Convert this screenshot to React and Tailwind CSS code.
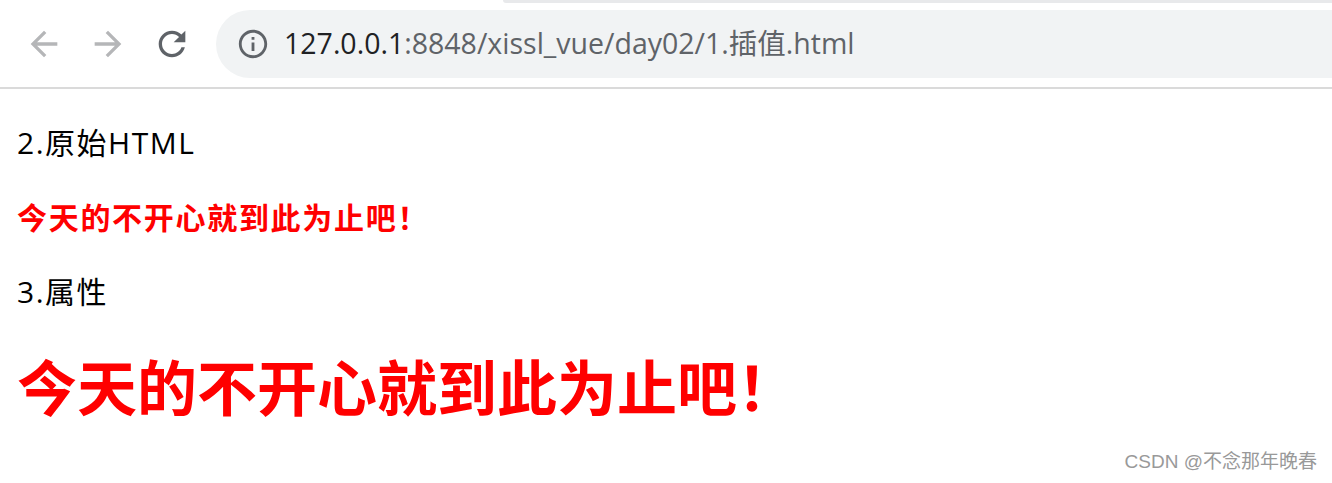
import React from "react";

const latin = "font-['Open_Sans','Noto_Sans_CJK_SC',sans-serif]";

function BackIcon({ color }) {
    return (
        <svg width="40" height="40" viewBox="0 0 24 24" fill={color}>
            <path d="M20 11H7.83l5.59-5.59L12 4l-8 8 8 8 1.41-1.41L7.83 13H20v-2z" />
        </svg>
    );
}

function ForwardIcon({ color }) {
    return (
        <svg width="40" height="40" viewBox="0 0 24 24" fill={color}>
            <path d="M12 4l-1.41 1.41L16.17 11H4v2h12.17l-5.58 5.59L12 20l8-8z" />
        </svg>
    );
}

function ReloadIcon() {
    return (
        <svg width="40" height="40" viewBox="0 0 24 24" fill="#5f6368">
            <path d="M17.65 6.35C16.2 4.9 14.21 4 12 4c-4.42 0-7.99 3.58-7.99 8s3.57 8 7.99 8c3.73 0 6.84-2.55 7.73-6h-2.08c-.82 2.33-3.04 4-5.65 4-3.31 0-6-2.69-6-6s2.69-6 6-6c1.66 0 3.14.69 4.22 1.78L13 11h7V4l-2.35 2.35z" />
        </svg>
    );
}

function InfoIcon() {
    return (
        <svg width="34" height="34" viewBox="0 0 24 24" fill="#5f6368">
            <path d="M11 7h2v2h-2zm0 4h2v6h-2zm1-9C6.48 2 2 6.48 2 12s4.48 10 10 10 10-4.48 10-10S17.52 2 12 2zm0 18c-4.41 0-8-3.59-8-8s3.59-8 8-8 8 3.59 8 8-3.59 8-8 8z" />
        </svg>
    );
}

export default function App() {
    return (
        <div className="relative w-[1332px] h-[483px] bg-white overflow-hidden">
            {/* toolbar */}
            <div className="relative h-[89px] border-b-2 border-[#dadada]">
                <div className="absolute top-0 left-[503px] right-0 h-[3px] bg-[#e8e9eb] rounded-bl-[10px]" />
                <div className="flex items-center h-[87px]">
                    <div className="flex items-center ml-[24px] gap-[24px]">
                        <BackIcon color="#b5b6b8" />
                        <ForwardIcon color="#b5b6b8" />
                        <ReloadIcon />
                    </div>
                    <div className="flex items-center ml-[24px] h-[68px] flex-1 bg-[#f1f3f4] rounded-l-[34px] pl-[20px]">
                        <InfoIcon />
                        <span className={`ml-[14px] text-[28.5px] leading-none ${latin}`}>
                            <span className="text-[#202124]">127.0.0.1</span>
                            <span className="text-[#5f6368]">:8848/xissl_vue/day02/1.插值.html</span>
                        </span>
                    </div>
                </div>
            </div>

            {/* page body */}
            <div className="pl-[17px] text-black">
                <div className={`mt-[34px] h-[40px] leading-[40px] text-[30px] tracking-[1.5px] ${latin}`}>2.原始HTML</div>
                <div className="mt-[33px] h-[40px] leading-[40px] text-[30px] tracking-[1.7px] font-bold text-[#ff0000] font-['Noto_Sans_CJK_SC',sans-serif]">
                    今天的不开心就到此为止吧！
                </div>
                <div className={`mt-[36px] h-[40px] leading-[40px] text-[30px] tracking-[1.5px] ${latin}`}>3.属性</div>
                <div className="mt-[38px] h-[70px] leading-[70px] text-[60px] font-bold text-[#ff0000] font-['Noto_Sans_CJK_SC',sans-serif]">
                    今天的不开心就到此为止吧！
                </div>
            </div>

            <div className="absolute right-[15px] bottom-[7px] text-[19px] text-[#999999] font-['Liberation_Sans','Noto_Sans_CJK_SC',sans-serif]">
                CSDN @不念那年晚春
            </div>
        </div>
    );
}
